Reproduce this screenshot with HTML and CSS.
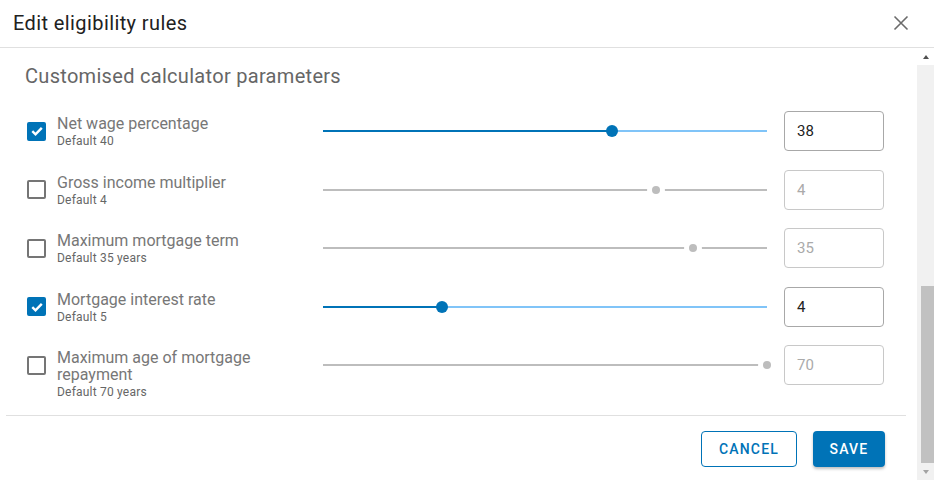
FILE: index.html
```html
<!DOCTYPE html>
<html lang="en">
  <head>
    <meta charset="UTF-8" />
    <meta name="viewport" content="width=device-width, initial-scale=1.0" />
    <title>Edit eligibility rules</title>
    <link rel="stylesheet" href="styles.css">
  </head>
  <body>
    <div class="dialog">
      <header class="dialog-head">
        <h1>Edit eligibility rules</h1>
        <button class="close" aria-label="Close">
          <svg width="16" height="16" viewBox="0 0 16 16">
            <path d="M1.5 1.5 L14.5 14.5 M14.5 1.5 L1.5 14.5" stroke="#6b6b6b" stroke-width="1.6" fill="none" />
          </svg>
        </button>
      </header>
      <div class="dialog-main">
        <div class="dialog-col">
          <section class="dialog-body">
            <h2>Customised calculator parameters</h2>
            <div class="param-list">
              <div class="param">
                <span class="check on">
                  <svg width="14" height="14" viewBox="0 0 14 14"><path d="M2.3 7.2 L5.5 10.3 L11.8 3.8" stroke="#fff" stroke-width="2.4" fill="none" /></svg>
                </span>
                <div class="label">
                  <div class="name">Net wage percentage</div>
                  <div class="hint">Default 40</div>
                </div>
                <div class="slider">
                  <div class="rail"></div>
                  <div class="track" style="width: 65%"></div>
                  <div class="thumb" style="left: 65%"></div>
                </div>
                <div class="field">38</div>
              </div>

              <div class="param off">
                <span class="check"></span>
                <div class="label">
                  <div class="name">Gross income multiplier</div>
                  <div class="hint">Default 4</div>
                </div>
                <div class="slider">
                  <div class="rail"></div>
                  <div class="thumb" style="left: 75%"></div>
                </div>
                <div class="field">4</div>
              </div>

              <div class="param off">
                <span class="check"></span>
                <div class="label">
                  <div class="name">Maximum mortgage term</div>
                  <div class="hint">Default 35 years</div>
                </div>
                <div class="slider">
                  <div class="rail"></div>
                  <div class="thumb" style="left: 83.4%"></div>
                </div>
                <div class="field">35</div>
              </div>

              <div class="param">
                <span class="check on">
                  <svg width="14" height="14" viewBox="0 0 14 14"><path d="M2.3 7.2 L5.5 10.3 L11.8 3.8" stroke="#fff" stroke-width="2.4" fill="none" /></svg>
                </span>
                <div class="label">
                  <div class="name">Mortgage interest rate</div>
                  <div class="hint">Default 5</div>
                </div>
                <div class="slider">
                  <div class="rail"></div>
                  <div class="track" style="width: 26.7%"></div>
                  <div class="thumb" style="left: 26.7%"></div>
                </div>
                <div class="field">4</div>
              </div>

              <div class="param off">
                <span class="check"></span>
                <div class="label">
                  <div class="name">Maximum age of mortgage repayment</div>
                  <div class="hint">Default 70 years</div>
                </div>
                <div class="slider">
                  <div class="rail"></div>
                  <div class="thumb" style="left: 100%"></div>
                </div>
                <div class="field">70</div>
              </div>
            </div>
          </section>
          <footer class="dialog-foot">
            <button class="btn outline">Cancel</button>
            <button class="btn solid">Save</button>
          </footer>
        </div>
        <div class="scrollbar">
          <span class="arrow up"></span>
          <span class="thumb-bar"></span>
          <span class="arrow down"></span>
        </div>
      </div>
    </div>
  </body>
</html>
```

FILE: styles.css
```css
* {
  padding: 0;
  margin: 0;
  box-sizing: border-box;
}
body {
  background: #fff;
  font-family: Roboto, "Liberation Sans", sans-serif;
  overflow: hidden;
}
.dialog {
  width: 934px;
  height: 480px;
  display: flex;
  flex-direction: column;
}
.dialog-head {
  height: 48px;
  border-bottom: 1px solid #e0e0e0;
  display: flex;
  align-items: center;
  justify-content: space-between;
  padding: 0 25px 2px 13px;
}
.dialog-head h1 {
  font-size: 20px;
  font-weight: 400;
  letter-spacing: 0.4px;
  color: #212121;
}
.close {
  border: 0;
  background: none;
  width: 16px;
  height: 16px;
  display: flex;
}
.dialog-main {
  flex: 1;
  display: flex;
  min-height: 0;
}
.dialog-col {
  width: 917px;
  display: flex;
  flex-direction: column;
}
.dialog-body {
  padding: 16px 33px 0 25px;
  height: 367px;
}
.dialog-body h2 {
  font-size: 20px;
  font-weight: 400;
  letter-spacing: 0.3px;
  color: #666;
  line-height: 24px;
  margin-bottom: 14px;
}
.param {
  height: 58.5px;
  display: flex;
  align-items: center;
}
.check {
  width: 19px;
  height: 19px;
  margin-left: 2px;
  border: 2px solid #757575;
  border-radius: 2px;
  display: flex;
  align-items: center;
  justify-content: center;
}
.check.on {
  background: #0073b7;
  border-color: #0073b7;
}
.label {
  align-self: flex-start;
  width: 250px;
  margin: 13px 0 0 11px;
  padding-right: 36px;
}
.name {
  font-size: 16px;
  line-height: 17px;
  color: #777;
}
.hint {
  font-size: 12px;
  line-height: 15px;
  color: #666;
  margin-top: 2px;
  letter-spacing: 0.2px;
}
.slider {
  position: relative;
  flex: 1;
  height: 12px;
  margin: 0 17px 0 16px;
}
.rail,
.track {
  position: absolute;
  left: 0;
  top: 5px;
  height: 2px;
}
.rail {
  width: 100%;
  background: #80c4f8;
}
.track {
  background: #0073b7;
}
.thumb {
  position: absolute;
  top: 0;
  width: 12px;
  height: 12px;
  margin-left: -6px;
  border-radius: 50%;
  background: #0073b7;
}
.off .rail {
  background: #bdbdbd;
}
.off .thumb {
  top: 2px;
  width: 8px;
  height: 8px;
  margin-left: -4px;
  background: #bdbdbd;
  box-shadow: 0 0 0 5px #fff;
}
.field {
  width: 100px;
  height: 40px;
  border: 1px solid #a8a8a8;
  border-radius: 4px;
  padding: 0 12px;
  font-size: 15px;
  line-height: 38px;
  color: #222;
}
.off .field {
  border-color: #c8c8c8;
  color: #aaa;
}
.dialog-foot {
  margin: 0 11px 0 6px;
  border-top: 1px solid #e0e0e0;
  display: flex;
  justify-content: flex-end;
  gap: 16px;
  padding: 15px 21px 0 0;
}
.btn {
  height: 36px;
  border-radius: 4px;
  font-family: Roboto, "Liberation Sans", sans-serif;
  font-size: 14px;
  font-weight: 500;
  letter-spacing: 1.2px;
  text-transform: uppercase;
}
.btn.outline {
  width: 96px;
  background: #fff;
  color: #0073b7;
  border: 1px solid #0073b7;
}
.btn.solid {
  width: 72px;
  background: #0073b7;
  color: #fff;
  border: 0;
  box-shadow: 0 2px 3px rgba(0, 0, 0, 0.25);
}
.scrollbar {
  width: 17px;
  background: #f1f1f1;
  display: flex;
  flex-direction: column;
  align-items: flex-end;
}
.arrow {
  width: 17px;
  height: 17px;
  display: flex;
  align-items: center;
  justify-content: center;
}
.arrow::before {
  content: "";
  border-left: 3.5px solid transparent;
  border-right: 3.5px solid transparent;
}
.arrow.up {
  background: #fff;
  margin-bottom: 221px;
}
.arrow.up::before {
  border-bottom: 4px solid #505050;
}
.arrow.down::before {
  border-top: 4px solid #a3a3a3;
}
.thumb-bar {
  width: 13px;
  height: 177px;
  background: #c1c1c1;
}
```
